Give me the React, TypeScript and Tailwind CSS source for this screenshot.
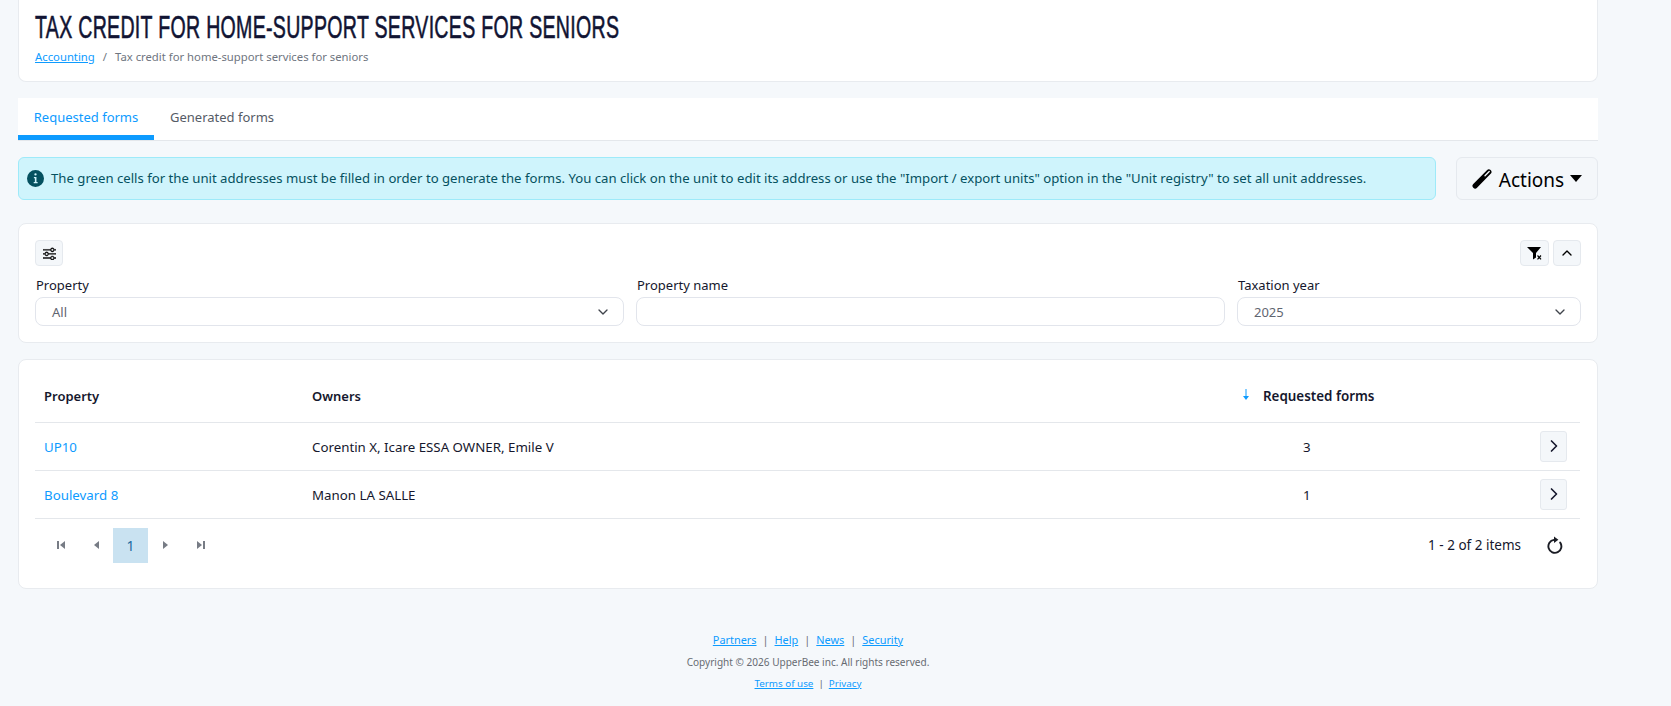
import { ChevronDown, ChevronRight, ChevronUp } from "lucide-react";
import { BsSliders } from "react-icons/bs";

function SelectBox({ value, className }: { value: string; className?: string }) {
  return (
    <div className={`flex h-[29px] items-center justify-between rounded-[8px] border border-[#e2e5ec] bg-white pl-[16px] pr-[12px] text-[#5f6570] ${className ?? ""}`}>
      <span>{value}</span>
      <ChevronDown size={16} strokeWidth={2} className="text-[#40444c]" />
    </div>
  );
}

function Pager({ type }: { type: "first" | "prev" | "next" | "last" }) {
  const paths = {
    first: "M1 1h2v8H1zM9 1v8L4 5z",
    prev: "M8 1v8L3 5z",
    next: "M2 1v8l5-4z",
    last: "M1 1v8l5-4zM7 1h2v8H7z",
  };
  return (
    <span className="flex h-[35px] w-[35px] items-center justify-center">
      <svg width="10" height="10" viewBox="0 0 10 10" fill="#777c85">
        <path d={paths[type]} />
      </svg>
    </span>
  );
}

function RowBtn() {
  return (
    <span className="ml-auto mr-[13px] flex h-[31px] w-[27px] items-center justify-center rounded-[3px] border border-[#e5e9ee] bg-[#f4f7fa] pl-[1px] text-[#15172d]">
      <ChevronRight size={20} strokeWidth={2} />
    </span>
  );
}

const link = "text-[#0d9bff]";

export default function App() {
  return (
    <div className="h-[706px] overflow-hidden bg-[#f5f8fb] font-['Noto_Sans',sans-serif] text-[13px] text-[#15172d]">
      <div className="w-[1598px] pl-[18px]">
        <header className="h-[82px] rounded-b-[8px] border border-t-0 border-[#e8ebef] bg-white pl-[16px] pt-[9px]">
          <h1 className="w-max origin-left scale-x-[0.611] font-['Liberation_Sans',sans-serif] text-[32px] font-normal leading-[36px] tracking-[0.5px] text-[#111433] [-webkit-text-stroke:0.6px_#111433]">TAX CREDIT FOR HOME-SUPPORT SERVICES FOR SENIORS</h1>
          <div className="mt-[4px] text-[11.3px] leading-[16px] text-[#6f7580]">
            <a className={`${link} underline`}>Accounting</a>
            <span className="mx-[8px]">/</span>
            <span>Tax credit for home-support services for seniors</span>
          </div>
        </header>

        <nav className="mt-[16px] flex h-[43px] border-b border-[#e4e7eb] bg-white text-[13px]">
          <span className="flex w-[136px] items-center justify-center border-b-[5px] border-[#0d9bff] pt-[3px] text-[#0d9bff]">Requested forms</span>
          <span className="flex items-center px-[16px] pb-[2px] text-[#555b66]">Generated forms</span>
        </nav>

        <div className="mt-[16px] flex gap-[20px]">
          <div className="flex h-[43px] flex-1 items-center gap-[7px] rounded-[6px] border border-[#9eeaf9] bg-[#cff4fc] pl-[8px] text-[13.17px] text-[#055160]">
            <svg width="17" height="17" viewBox="0 0 16 16" fill="#055160">
              <path d="M8 0a8 8 0 1 0 0 16A8 8 0 0 0 8 0zM8 3a1.1 1.1 0 1 1 0 2.2A1.1 1.1 0 0 1 8 3zM6.5 6.6h2.4v4.7H10v1.2H6.3v-1.2h1.1V7.8H6.5z" fillRule="evenodd" />
            </svg>
            <span>The green cells for the unit addresses must be filled in order to generate the forms. You can click on the unit to edit its address or use the "Import / export units" option in the "Unit registry" to set all unit addresses.</span>
          </div>
          <button className="flex h-[43px] w-[142px] items-center justify-center gap-[6px] rounded-[6px] border border-[#e5e9ee] bg-[#f4f7fa] text-[19px] text-[#000]">
            <svg width="21" height="21" viewBox="0 0 20 20">
              <path d="M3 17 16 3.8" stroke="#000" strokeWidth="5" strokeLinecap="round" />
              <path d="M12.4 7.4 16.4 3.4" stroke="#f4f7fa" strokeWidth="1.3" strokeLinecap="round" />
            </svg>
            <span className="pt-[3px]">Actions</span>
            <svg width="12" height="7" viewBox="0 0 12 7" fill="#000"><path d="M0 0h12L6 7z" /></svg>
          </button>
        </div>

        <section className="mt-[23px] h-[120px] rounded-[8px] border border-[#e8ebef] bg-white px-[16px] pt-[16px]">
          <div className="flex justify-between">
            <span className="flex h-[26px] w-[28px] items-center justify-center rounded-[4px] border border-[#e5e9ee] bg-[#f4f7fa] text-black">
              <BsSliders size={13} stroke="currentColor" strokeWidth={0.5} />
            </span>
            <div className="flex gap-[4px]">
              <span className="flex h-[26px] w-[29px] items-center justify-center rounded-[4px] border border-[#e5e9ee] bg-[#f4f7fa]">
                <svg width="15" height="13" viewBox="0 0 15 13">
                  <path d="M0 0h14L9 6v4.5L6 12.5V6z" fill="#000" />
                  <path d="M10.5 8.5l3.5 3.8M14 8.5l-3.5 3.8" stroke="#000" strokeWidth="1.2" />
                </svg>
              </span>
              <span className="flex h-[26px] w-[28px] items-center justify-center rounded-[4px] border border-[#e5e9ee] bg-[#f4f7fa] text-black">
                <ChevronUp size={16} strokeWidth={2} />
              </span>
            </div>
          </div>
          <div className="mt-[10px] flex gap-[12px] leading-[18px]">
            <label className="flex-1"><span className="block h-[21px] pl-[1px]">Property</span><SelectBox value="All" /></label>
            <label className="flex-1"><span className="block h-[21px] pl-[1px]">Property name</span><div className="h-[29px] rounded-[8px] border border-[#e2e5ec] bg-white" /></label>
            <label className="w-[344px]"><span className="block h-[21px] pl-[1px]">Taxation year</span><SelectBox value="2025" /></label>
          </div>
        </section>

        <section className="mt-[16px] h-[230px] rounded-[8px] border border-[#e8ebef] bg-white pl-[16px] pr-[17px]">
          <table className="w-full border-collapse text-left text-[13.3px]">
            <colgroup>
              <col className="w-[268px]" />
              <col className="w-[925px]" />
              <col className="w-[238px]" />
              <col />
            </colgroup>
            <thead>
              <tr className="h-[62px] border-b border-[#e4e7eb] font-semibold">
                <th className="pl-[9px] pt-[11px] text-[13px] font-semibold">Property</th>
                <th className="pl-[9px] pt-[11px] text-[13px] font-semibold">Owners</th>
                <th className="pt-[11px] text-[13.4px] font-semibold" colSpan={2}>
                  <span className="flex items-center">
                    <svg width="10" height="12" viewBox="0 0 10 12" className="ml-[13px] mr-[12px] -mt-[2px]"><path d="M5 0v8" stroke="#0d9bff" /><path d="M2 7h6l-3 4z" fill="#0d9bff" /></svg>
                    Requested forms
                  </span>
                </th>
              </tr>
            </thead>
            <tbody>
              {[["UP10", "Corentin X, Icare ESSA OWNER, Emile V", "3"], ["Boulevard 8", "Manon LA SALLE", "1"]].map(([p, o, n]) => (
                <tr key={p} className="h-[48px] border-b border-[#e4e7eb]">
                  <td className={`pl-[9px] pt-[4px] ${link}`}>{p}</td>
                  <td className="pl-[9px] pt-[4px]">{o}</td>
                  <td className="pl-[75px] pt-[4px]">{n}</td>
                  <td><RowBtn /></td>
                </tr>
              ))}
            </tbody>
          </table>
          <div className="mt-[9px] flex items-center justify-between pl-[8px] pr-[17px]">
            <div className="flex items-center">
              <Pager type="first" />
              <Pager type="prev" />
              <span className="flex h-[35px] w-[35px] items-center justify-center bg-[#c9e2f1] text-[14px] text-[#1b6aa0]">1</span>
              <Pager type="next" />
              <Pager type="last" />
            </div>
            <div className="flex items-center gap-[26px]">
              <span className="text-[13.5px]">1 - 2 of 2 items</span>
              <svg width="16" height="18" viewBox="0 0 16 18" fill="none">
                <path d="M13.2 6.6A6.5 6.5 0 1 1 7 3.9" stroke="#1a1c24" strokeWidth="1.9" strokeLinecap="round" />
                <path d="M7 0.6 11.4 3.8 7 7z" fill="#1a1c24" />
              </svg>
            </div>
          </div>
        </section>
      </div>

      <footer className="mt-[42px] w-[1616px] text-center text-[#676b72]">
        <div className="text-[10.9px] leading-[18px]">
          <a className={`${link} underline`}>Partners</a><span className="mx-[6px]">|</span>
          <a className={`${link} underline`}>Help</a><span className="mx-[6px]">|</span>
          <a className={`${link} underline`}>News</a><span className="mx-[6px]">|</span>
          <a className={`${link} underline`}>Security</a>
        </div>
        <div className="mt-[4px] text-[10.05px] leading-[18px]">Copyright © 2026 UpperBee inc. All rights reserved.</div>
        <div className="mt-[4px] text-[9.8px] leading-[18px]">
          <a className={`${link} underline`}>Terms of use</a><span className="mx-[5px]">|</span>
          <a className={`${link} underline`}>Privacy</a>
        </div>
      </footer>
    </div>
  );
}
